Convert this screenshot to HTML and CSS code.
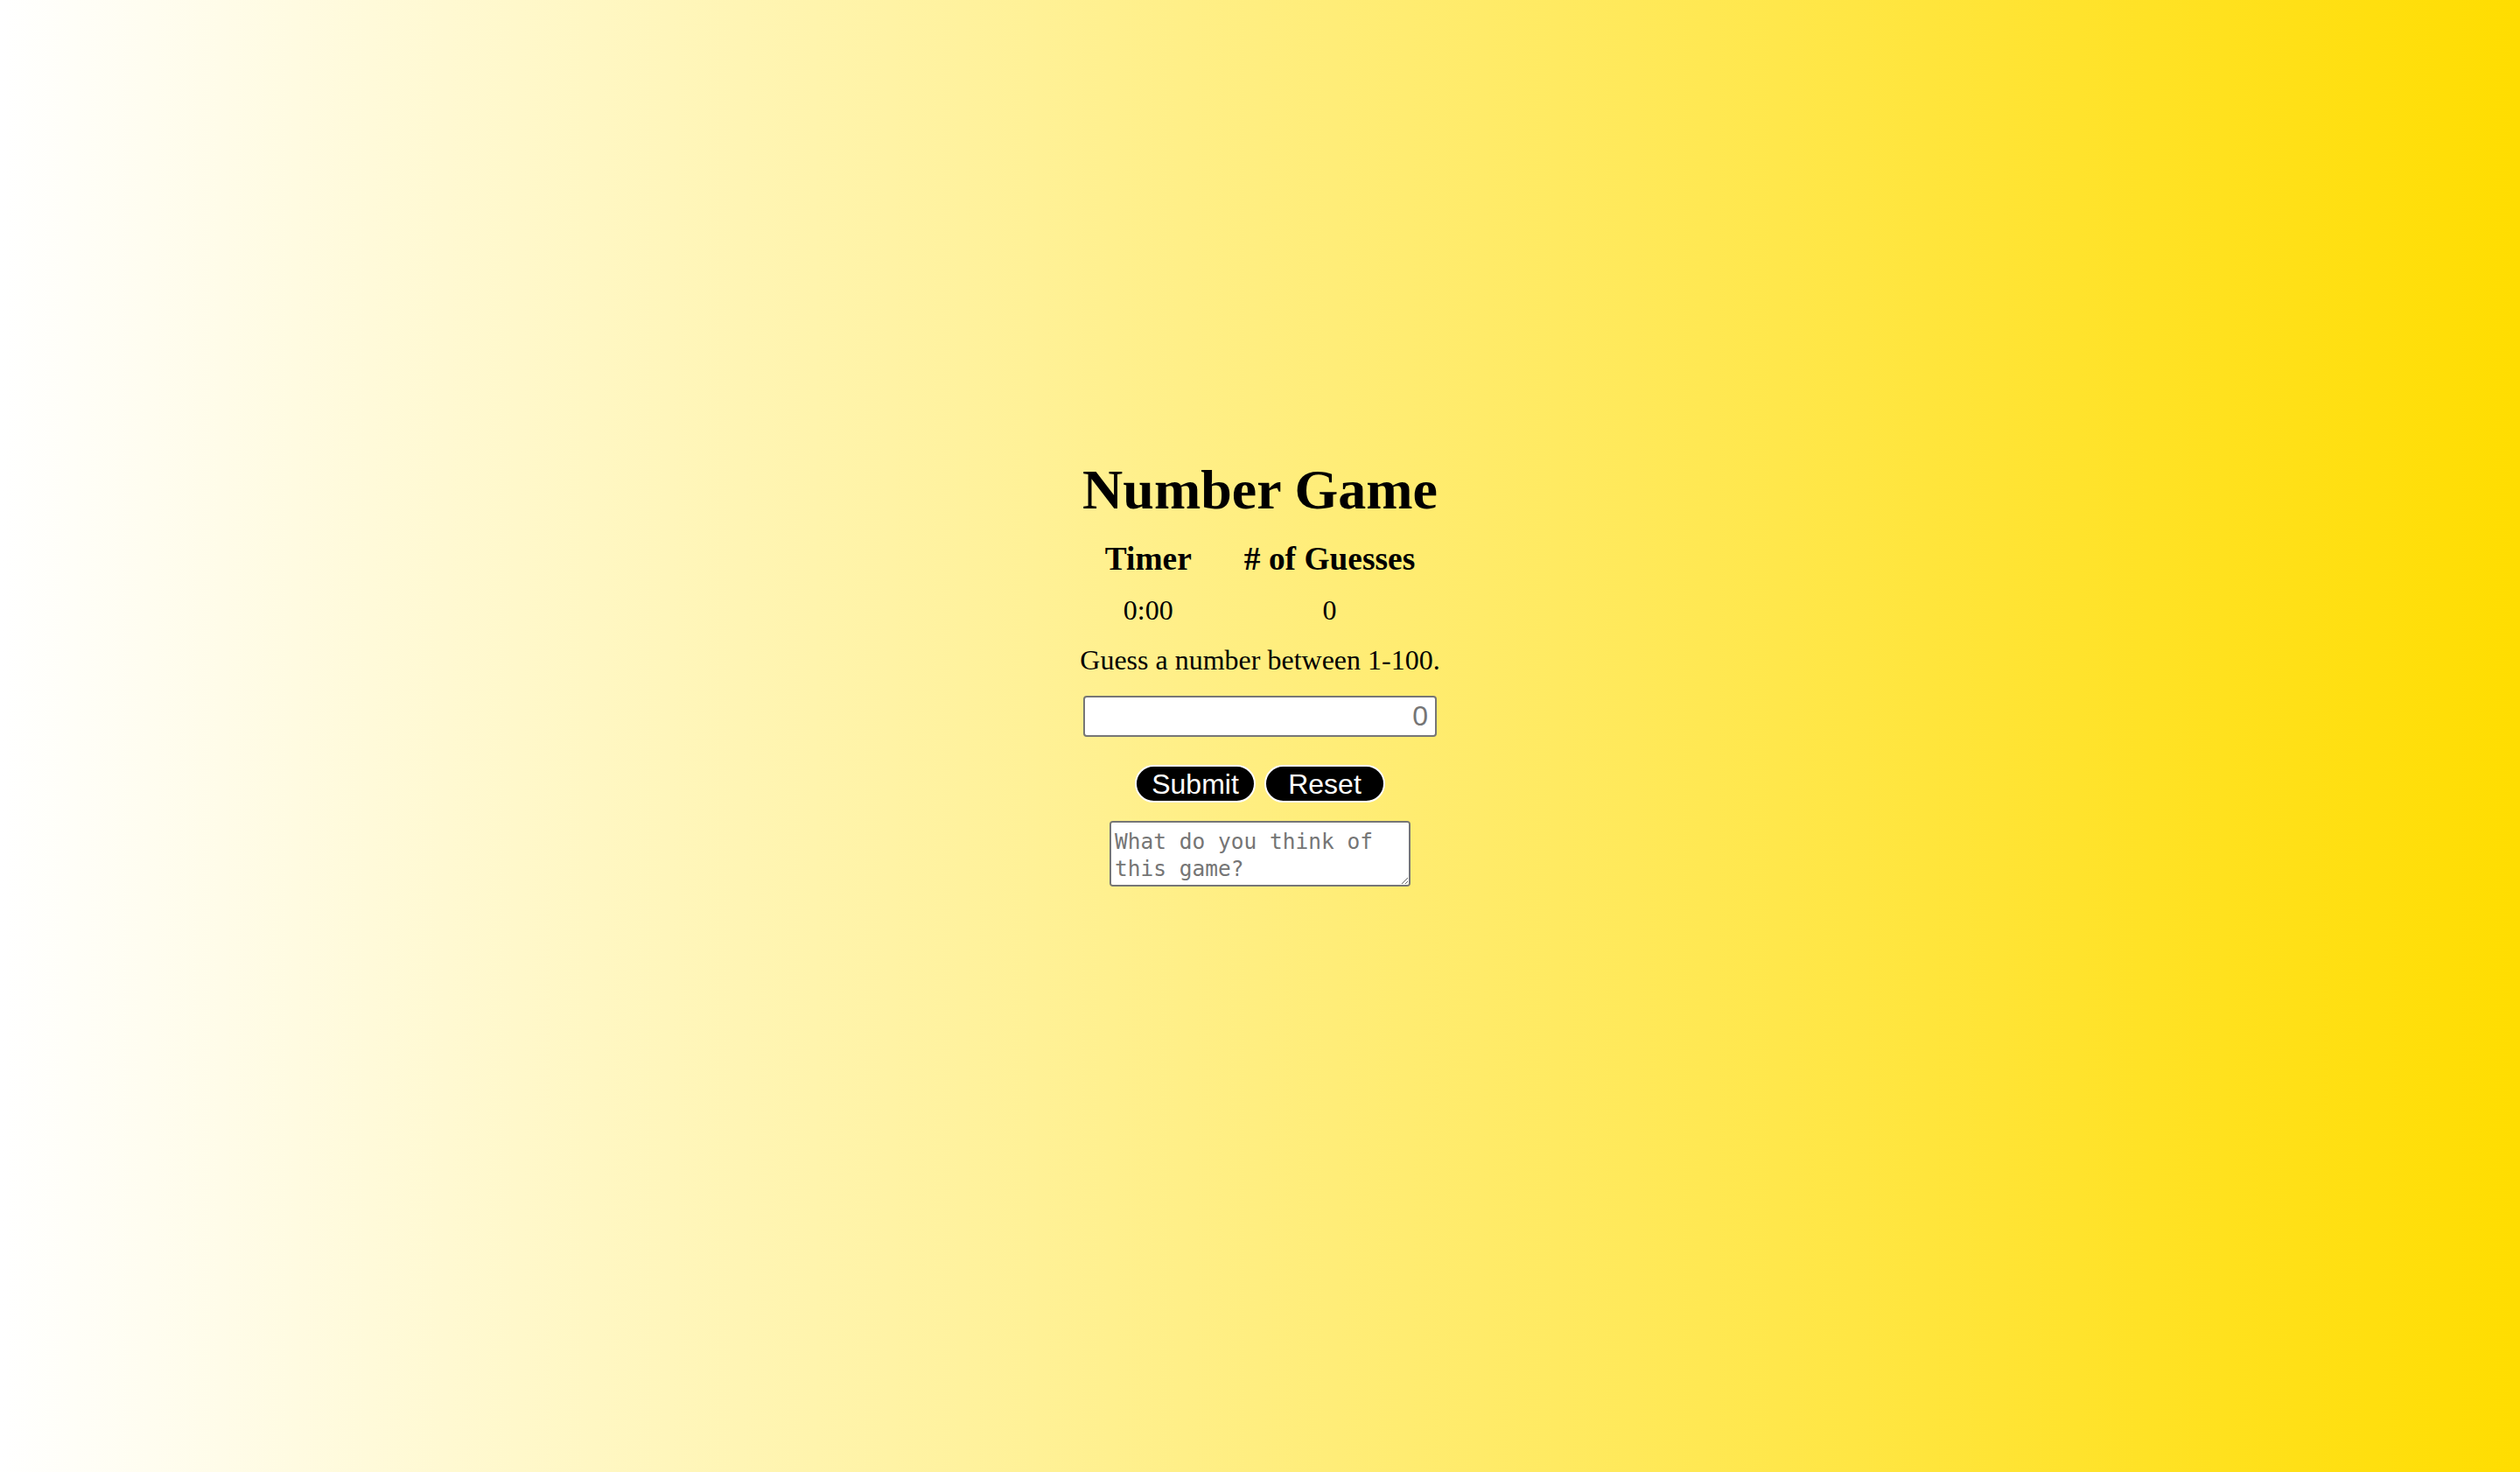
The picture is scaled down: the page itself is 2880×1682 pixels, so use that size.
FILE: index.html
```html
<!DOCTYPE html>
<html lang="en">
<head>
<meta charset="utf-8">
<title>Number Game</title>
<link rel="stylesheet" href="styles.css">
</head>
<body>
<main class="game">
  <h1 class="title">Number Game</h1>
  <div class="stats">
    <div class="stat-label">Timer</div>
    <div class="stat-label"># of Guesses</div>
    <div class="stat-value">0:00</div>
    <div class="stat-value">0</div>
  </div>
  <p class="prompt">Guess a number between 1-100.</p>
  <input class="guess" type="number" placeholder="0">
  <div class="actions">
    <button class="btn" type="button">Submit</button>
    <button class="btn" type="button">Reset</button>
  </div>
  <textarea class="feedback" placeholder="What do you think of this game?"></textarea>
</main>
</body>
</html>
```
FILE: styles.css
```css
html {
  min-height: 100%;
  background: linear-gradient(to right, #ffffff, #ffdd00);
}

body {
  margin: 0;
  min-height: 100vh;
  font-family: "Liberation Serif", "Times New Roman", serif;
  color: #000;
}

.game {
  display: flex;
  flex-direction: column;
  align-items: center;
  padding-top: 524px;
}

.title {
  margin: 0;
  font-size: 64px;
  line-height: 72px;
  font-weight: bold;
}

.stats {
  display: grid;
  grid-template-columns: auto auto;
  column-gap: 60px;
  row-gap: 19px;
  justify-items: center;
  margin-top: 22px;
}

.stat-label {
  font-size: 37.44px;
  line-height: 42px;
  font-weight: bold;
}

.stat-value {
  font-size: 32px;
  line-height: 36px;
}

.prompt {
  margin: 21px 0 0;
  font-size: 32px;
  line-height: 36px;
}

.guess {
  box-sizing: border-box;
  margin-top: 23px;
  width: 404px;
  height: 47px;
  padding: 0 8px;
  border: 2px solid #767676;
  border-radius: 4px;
  background: #fff;
  font-family: "Liberation Sans", Arial, sans-serif;
  font-size: 32px;
  text-align: right;
  -moz-appearance: textfield;
}

.guess::-webkit-outer-spin-button,
.guess::-webkit-inner-spin-button {
  -webkit-appearance: none;
  margin: 0;
}

.guess::placeholder {
  color: #757575;
}

.actions {
  display: flex;
  gap: 10px;
  margin-top: 32px;
}

.btn {
  box-sizing: border-box;
  width: 138px;
  height: 43px;
  padding: 0;
  border: 2px solid #fff;
  border-radius: 22px;
  background: #000;
  color: #fff;
  font-family: "Liberation Sans", Arial, sans-serif;
  font-size: 32px;
  line-height: 36px;
}

.feedback {
  box-sizing: border-box;
  margin-top: 21px;
  width: 344px;
  height: 75px;
  padding: 6px 4px 4px;
  border: 2px solid #767676;
  border-radius: 4px;
  background: #fff;
  font-family: "DejaVu Sans Mono", "Liberation Mono", monospace;
  font-size: 24.5px;
  line-height: 31px;
}

.feedback::placeholder {
  color: #757575;
}
```
